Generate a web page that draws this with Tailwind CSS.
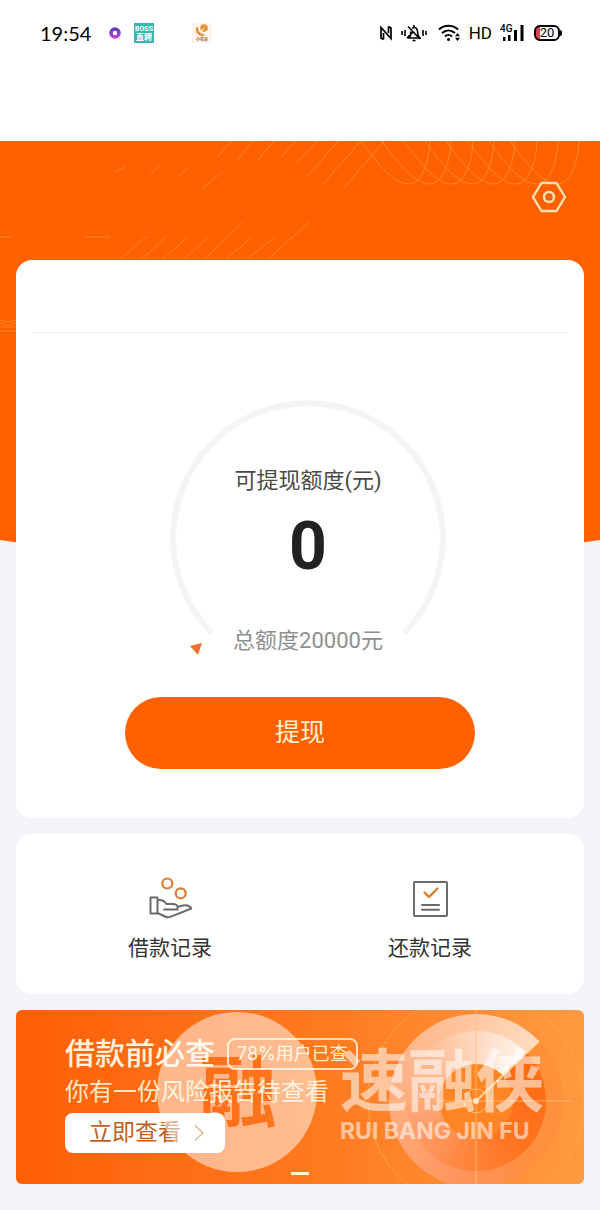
<!DOCTYPE html>
<html lang="zh-CN">
<head>
<meta charset="utf-8">
<meta name="viewport" content="width=device-width, initial-scale=1">
<title>可提现额度</title>
<script src="https://cdn.jsdelivr.net/npm/@tailwindcss/browser@4"></script>
</head>
<body class="min-h-screen bg-[#f4f5fa] font-['Roboto','Noto_Sans_CJK_SC',sans-serif] text-[#333]">

<!-- Status bar -->
<header class="bg-white pb-[75px]">
  <div class="flex h-[66px] items-center justify-between pr-[38px] pl-10">
    <div class="flex items-center">
      <time class="w-[54px] font-['Lato',sans-serif] text-[20px] leading-6 text-black">19:54</time>
      <svg class="ml-[15px] size-3" viewBox="0 0 12 12" aria-hidden="true">
        <defs><linearGradient id="dot" x1="0" y1="0" x2="0" y2="1"><stop offset="0" stop-color="#5b3fc4"/><stop offset="1" stop-color="#c23fd0"/></linearGradient></defs>
        <circle cx="6" cy="6" r="4" fill="#fff" stroke="url(#dot)" stroke-width="3.6"/>
      </svg>
      <div class="ml-[13px] flex size-5 flex-col items-center justify-center bg-[#3cb5b1] text-white">
        <span class="text-[7px] leading-[8px] font-bold">BOSS</span>
        <span class="text-[8px] leading-[9px] font-bold">直聘</span>
      </div>
      <div class="ml-[38px] flex size-5 flex-col items-center bg-[#fbf5ee]">
        <svg class="h-[14px] w-5" viewBox="0 0 20 14" aria-hidden="true">
          <circle cx="12" cy="5" r="3.800" fill="#e8923a"/>
          <path d="M5 5.500C5 9 7 11.500 11 12" fill="none" stroke="#e8923a" stroke-width="2.600" stroke-linecap="round"/>
          <path d="M8.500 8.500l3.500-3" stroke="#fff" stroke-width="1"/>
        </svg>
        <span class="text-[4px] leading-[5px] font-bold text-[#a8642a]">小花朵</span>
      </div>
    </div>
    <div class="flex items-center text-black">
      <svg class="h-4 w-[14px]" viewBox="0 0 14 16" fill="none" stroke="currentColor" stroke-width="1.700" aria-hidden="true">
        <path d="M4.500 14.500L2 13V2.500L12 13.500V3L9.500 1.500M4.500 14.500V8M9.500 1.500V8"/>
      </svg>
      <svg class="ml-2 h-[18px] w-[26px]" viewBox="0 0 26 18" fill="none" stroke="currentColor" stroke-width="1.600" aria-hidden="true">
        <path d="M1 7v4M4 6v6M22 6v6M25 7v4M6 14h14M8.500 13.500c1.500-2 1-4 1.200-6M11 4.500c3-2.500 5.500 0 5.500 3 0 3 .5 4.500 2 6M7 2.500L19 15M13 1v2M11.500 16.500h3M6 14L12 8"/>
      </svg>
      <svg class="ml-[11px] h-[18px] w-[23px]" viewBox="0 0 23 18" fill="none" stroke="currentColor" stroke-width="2" aria-hidden="true">
        <path d="M1 5.500C6.500.5 14.500.5 20 5.500M4 9c4-3.500 9-3.500 13 0M7 12.500c2-2 5-2 7 0"/>
        <circle cx="10.500" cy="15.500" r="1.500" fill="currentColor" stroke="none"/>
        <path d="M19.500 9l2.500 3.200h-5zM19.500 17l2.500-3.200h-5z" fill="currentColor" stroke="none"/>
      </svg>
      <span class="ml-2 text-[17px] leading-6">HD</span>
      <div class="ml-2 grid h-[18px] w-6">
        <span class="col-start-1 row-start-1 text-[10px] leading-[10px] font-medium">4G</span>
        <svg class="col-start-1 row-start-1 h-[18px] w-6" viewBox="0 0 24 18" fill="currentColor" aria-hidden="true">
          <rect x="3" y="13" width="2.500" height="4"/><rect x="8" y="11" width="2.500" height="6"/><rect x="14" y="6" width="3" height="11"/><rect x="20.500" y="1" width="3" height="16"/>
        </svg>
      </div>
      <div class="ml-[10px] flex items-center">
        <div class="flex h-4 w-[26px] items-center justify-center rounded-[6px] border-2 border-black bg-linear-to-r from-[#d9434f] from-20% to-white to-20%">
          <span class="text-[13px] leading-3">20</span>
        </div>
        <span class="h-[6px] w-[2px] rounded-r bg-black"></span>
      </div>
    </div>
  </div>
</header>

<main class="relative px-4 pb-[26px]">
  <!-- Orange backdrop with curved lower edge -->
  <svg class="absolute inset-x-0 top-0 h-[440px] w-full" viewBox="0 0 600 440" preserveAspectRatio="none" aria-hidden="true">
    <path d="M0 0H600V399Q300 445 0 399Z" fill="#ff6000"/>
    <g fill="none" stroke="#ffa040" stroke-opacity=".6" stroke-width="1">
      <path d="M115 31l10-5M150 33l10-8M177 36l11-9M202 48l20-17M218 16L231 0M237 20L252 0M258 19L274 0M282 16L295 0M297 22L317 0M307 36L338 0M323 43L361 0M344 47L384 0"/>
      <path d="M120 118l27-23M142 118l25-23M163 118l25-22M184 118l25-22M205 118l38-37M226 118l26-22M247 118l28-22M268 118l41-37"/>
      <path d="M0 96h12M85 96h25M0 179q8 4 16 0M0 182q8 4 16 0M0 186h16M0 190h16"/>
      <path id="u" d="M361 0C374 18 393 43 408 43C422 43 429 22 430 0"/>
      <use href="#u" x="21"/><use href="#u" x="43"/><use href="#u" x="64"/><use href="#u" x="85"/><use href="#u" x="107"/><use href="#u" x="128"/><use href="#u" x="149"/>
    </g>
  </svg>

  <div class="relative flex flex-col gap-4">
    <div>
      <div class="flex h-[119px] items-start justify-end pt-9 pr-[15px]">
        <button type="button" aria-label="设置" class="size-10">
          <svg class="size-10" viewBox="0 0 40 40" fill="none" stroke="#ffe2b4" stroke-width="2.400" stroke-linejoin="round" aria-hidden="true">
            <path d="M12.500 6h15L36 20l-8.500 14h-15L4 20z"/><circle cx="20" cy="20" r="5"/>
          </svg>
        </button>
      </div>

      <!-- Credit limit -->
      <section class="rounded-2xl bg-white px-4 pb-[49px]">
        <div class="h-[73px] border-b border-[#ececec]"></div>
        <div class="flex justify-center pt-[66px] pl-4">
          <div class="grid w-[276px]">
            <svg class="col-start-1 row-start-1 h-[258px] w-[276px]" viewBox="0 0 276 258" fill="none" aria-hidden="true">
              <path d="M40 232A135 135 0 1 1 236 232" stroke="#f4f4f4" stroke-width="6" stroke-linecap="round"/>
              <path d="M20 247l12-3-4 12z" fill="#f07030"/>
            </svg>
            <div class="col-start-1 row-start-1 flex flex-col items-center">
              <h1 class="pt-[66px] text-[22px] leading-8 text-[#4a4a4a]">可提现额度(元)</h1>
              <strong class="mt-[18px] text-[66px] leading-[64px] font-bold text-[#222]">0</strong>
              <p class="mt-[46px] text-[22px] leading-8 text-[#8f8f8f]">总额度20000元</p>
            </div>
          </div>
        </div>
        <button type="button" class="mx-auto mt-10 block h-[72px] w-[350px] rounded-full bg-[#ff6000] text-[25px] text-[#fff0d0]">提现</button>
      </section>
    </div>

    <!-- Records -->
    <nav class="grid grid-cols-2 rounded-2xl bg-white px-6 pt-10 pb-8">
      <a href="#" class="flex flex-col items-center gap-3">
        <svg class="size-12" viewBox="0 0 48 48" fill="none" stroke="#6b6b6e" stroke-width="2" stroke-linejoin="round" stroke-linecap="round" aria-hidden="true">
          <g stroke="#e07a2c" stroke-width="2.200"><circle cx="21.300" cy="9.500" r="5"/><circle cx="34.700" cy="19.300" r="5"/></g>
          <path d="M4.500 23.500H11.500V39.500H4.500zM11.500 26.300C15 25.500 18 26.500 20.500 30H27C29.500 30 31.500 31.500 31.500 33L37 31.500C41 30.800 44 32 45.300 34.500L25 42.600Q22 44 19 42.500L11.500 39M18 35.400H31.500V33"/>
        </svg>
        <span class="text-[21px] leading-7">借款记录</span>
      </a>
      <a href="#" class="flex flex-col items-center gap-3">
        <svg class="size-12" viewBox="0 0 48 48" fill="none" stroke="#6b6b6e" stroke-width="2" stroke-linecap="round" stroke-linejoin="round" aria-hidden="true">
          <rect x="8" y="8" width="33" height="34" rx="1"/><path d="M16 31h17M16 35.700h17"/>
          <path d="M18.500 18.500l4.500 4.500 8.500-8.500" stroke="#e07a2c" stroke-width="2.400"/>
        </svg>
        <span class="text-[21px] leading-7">还款记录</span>
      </a>
    </nav>

    <!-- Risk report banner -->
    <section class="relative overflow-hidden rounded-md bg-linear-to-r from-[#ff5f04] via-[#ff7a20] via-55% to-[#ff9a40] pt-[26px] pb-[31px] pl-[49px]">
      <!-- Radar artwork -->
      <div class="absolute -top-[18px] -right-px grid size-[218px] place-items-center *:col-start-1 *:row-start-1" aria-hidden="true">
        <div class="size-[174px] rounded-full bg-[conic-gradient(from_46deg,#ff84304d,#ff8a4080_25%,#ff9660_42%,#ffae80_62%,#ffbe94_80%,#ffdcc0)]"></div>
        <div class="size-[140px] rounded-full bg-[conic-gradient(from_46deg,#ff6a10,#ff7420_25%,#ff8238_38%,#ffa272_58%,#ffc4a0_78%,#fff4ec)]"></div>
        <div class="size-[74px] rounded-full bg-[#ff8424]"></div>
        <svg class="size-[218px]" viewBox="0 0 218 218" fill="none" stroke="#ffc070">
          <circle cx="109" cy="109" r="108" stroke="#ffb040" stroke-opacity=".7"/>
          <path d="M109 0V218M17 109H204" stroke-opacity=".8"/>
          <circle cx="109" cy="109" r="12"/>
          <path d="M109 109L172 49" stroke="#ffd9a0" stroke-width="2"/>
          <circle cx="109" cy="109" r="3" fill="#ffe8c8" stroke="none"/>
        </svg>
      </div>

      <div class="relative flex flex-col items-start">
        <div class="flex h-9 items-center gap-3">
          <h2 class="text-[30px] leading-9 font-medium text-[#fff3dc]">借款前必查</h2>
          <span class="flex h-8 items-center rounded-lg border-2 border-[#ffe0b4] px-2 font-['Inter','Noto_Sans_CJK_SC',sans-serif] text-[18px] leading-7 text-[#fff0d4]">78%用户已查</span>
        </div>
        <p class="mt-1 text-[24px] leading-8 text-[#ffe8c4]">你有一份风险报告待查看</p>
        <button type="button" class="mt-[5px] flex h-10 w-40 items-center justify-center gap-3 rounded-lg bg-white pl-1 text-[23px] text-[#c0601c]">
          立即查看
          <svg class="h-[18px] w-3" viewBox="0 0 12 18" fill="none" stroke="currentColor" stroke-width="1.200" aria-hidden="true"><path d="M2 1.500L10 9l-8 7.500"/></svg>
        </button>
      </div>
      <span class="absolute bottom-[9px] left-1/2 h-[3px] w-[18px] -translate-x-1/2 bg-[#fff0dc]"></span>

      <!-- Brand stamp laid over the banner -->
      <svg class="pointer-events-none absolute top-[2px] left-[141px] size-40" viewBox="0 0 160 160" role="img" aria-label="融">
        <mask id="cut">
          <rect width="160" height="160" fill="#fff"/>
          <text x="81" y="109" text-anchor="middle" class="font-['Noto_Sans_CJK_SC',sans-serif] text-[78px] font-bold" fill="#000">融</text>
        </mask>
        <circle cx="80" cy="80" r="80" fill="#fff" fill-opacity=".5" mask="url(#cut)"/>
      </svg>
      <div class="pointer-events-none absolute top-[37px] left-[324px] flex flex-col text-white/55">
        <span class="text-[68px] leading-[72px] font-bold">速融侠</span>
        <span class="font-['Inter',sans-serif] text-[23px] leading-6 font-bold">RUI BANG JIN FU</span>
      </div>
    </section>
  </div>
</main>
</body>
</html>
